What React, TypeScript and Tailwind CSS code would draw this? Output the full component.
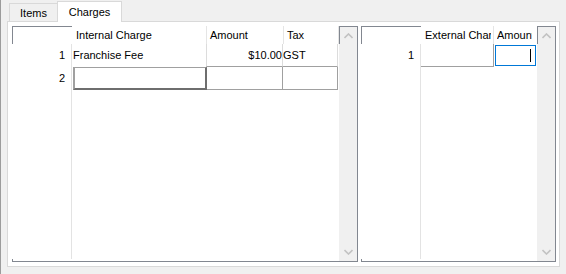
import React from "react";

const Chevron = ({ up }: { up?: boolean }) => (
  <svg width="9" height="6" viewBox="0 0 9 6">
    <polyline
      points={up ? "0.5,5 4.5,1 8.5,5" : "0.5,1 4.5,5 8.5,1"}
      fill="none"
      stroke="#c2c2c2"
      strokeWidth="1.6"
    />
  </svg>
);

const ScrollBar = () => (
  <div className="w-[18px] flex flex-col bg-[#f0f0f0] border-t border-[#828790]">
    <div className="h-[17px] border-l border-[#828790] flex items-center justify-center bg-[#f0f0f0]">
      <Chevron up />
    </div>
    <div className="flex-1 flex items-end justify-center pb-[6px] pl-[1px]">
      <Chevron />
    </div>
  </div>
);

const Corner = () => (
  <div className="w-[60px] h-full border-t border-l border-[#828790]" />
);

const RowHead = ({ n }: { n?: string }) => (
  <div className="w-[60px] h-full border-r border-[#e3e3e3] flex items-center justify-end pr-[6px]">
    {n}
  </div>
);

const LeftGrid = () => (
  <div className="w-[346px] flex border-b border-r border-[#828790]">
    <div className="flex-1 flex flex-col">
      <div className="h-[18px] flex">
        <Corner />
        <div className="w-[135px] border-r border-[#e5e5e5] pl-[4px] flex items-center">Internal Charge</div>
        <div className="w-[77px] border-r border-[#e5e5e5] pl-[3px] flex items-center">Amount</div>
        <div className="w-[55px] border-r border-[#e5e5e5] pl-[3px] flex items-center">Tax</div>
      </div>
      <div className="h-[23px] flex">
        <RowHead n="1" />
        <div className="w-[134px] pl-[1px] flex items-center">Franchise Fee</div>
        <div className="w-[77px] border-l border-r border-b border-[#dcdcdc] border-b-[#a0a0a0] flex items-center justify-end">$10.00</div>
        <div className="w-[55px] border-r border-b border-[#dcdcdc] border-b-[#a0a0a0] flex items-center">GST</div>
      </div>
      <div className="h-[23px] flex">
        <RowHead n="2" />
        <div className="w-[135px] pl-[1px] h-full">
          <div className="h-full border-t border-l-2 border-[#a0a0a0] border-b-2 border-r-2 border-b-[#6e6e6e] border-r-[#6e6e6e] bg-white" />
        </div>
        <div className="w-[76px] border-r border-b border-[#a0a0a0]" />
        <div className="w-[55px] border-r border-b border-[#a0a0a0]" />
      </div>
      <div className="flex-1 flex">
        <RowHead />
      </div>
      <div className="h-[2px] border-l border-[#828790]" />
    </div>
    <ScrollBar />
  </div>
);

const RightGrid = () => (
  <div className="w-[195px] flex border-b border-r border-[#828790]">
    <div className="flex-1 flex flex-col">
      <div className="h-[18px] flex">
        <Corner />
        <div className="w-[73px] border-r border-[#e5e5e5] pl-[4px] flex items-center">
          <span className="w-[66px] overflow-hidden whitespace-nowrap">External Charge</span>
        </div>
        <div className="w-[42px] pl-[3px] flex items-center">
          <span className="w-[35px] overflow-hidden whitespace-nowrap">Amount</span>
        </div>
      </div>
      <div className="h-[23px] flex">
        <RowHead n="1" />
        <div className="w-[73px] border-r border-b border-[#a0a0a0]" />
        <div className="w-[42px] pl-[1px] pt-[1px] pb-[1px] h-full">
          <div className="h-full border border-[#0078d7] flex items-center justify-end pr-[4px]">
            <div className="w-px h-[13px] bg-black" />
          </div>
        </div>
      </div>
      <div className="flex-1 flex">
        <RowHead />
      </div>
      <div className="h-[2px] border-l border-[#828790]" />
    </div>
    <ScrollBar />
  </div>
);

export default function App() {
  return (
    <div className="w-[566px] h-[274px] bg-[#f0f0f0] border-l border-[#9c9c9c] flex flex-col font-['Liberation_Sans',Arial,sans-serif] text-[11px] text-black overflow-hidden">
      <div className="h-[21px] flex items-end pl-[8px]">
        <div className="w-[48px] h-[18px] border-t border-l border-[#d9d9d9] bg-[#f0f0f0] flex items-center justify-center pt-[1px]">
          Items
        </div>
        <div className="relative z-10 w-[65px] h-[21px] -mb-px border-t border-l border-r border-[#d9d9d9] bg-white flex items-center justify-center">
          Charges
        </div>
      </div>
      <div className="ml-[6px] w-[553px] h-[246px] border border-[#d9d9d9] bg-white flex pl-[4px] pt-[4px] pb-[4px] gap-[3px]">
        <LeftGrid />
        <RightGrid />
      </div>
    </div>
  );
}
